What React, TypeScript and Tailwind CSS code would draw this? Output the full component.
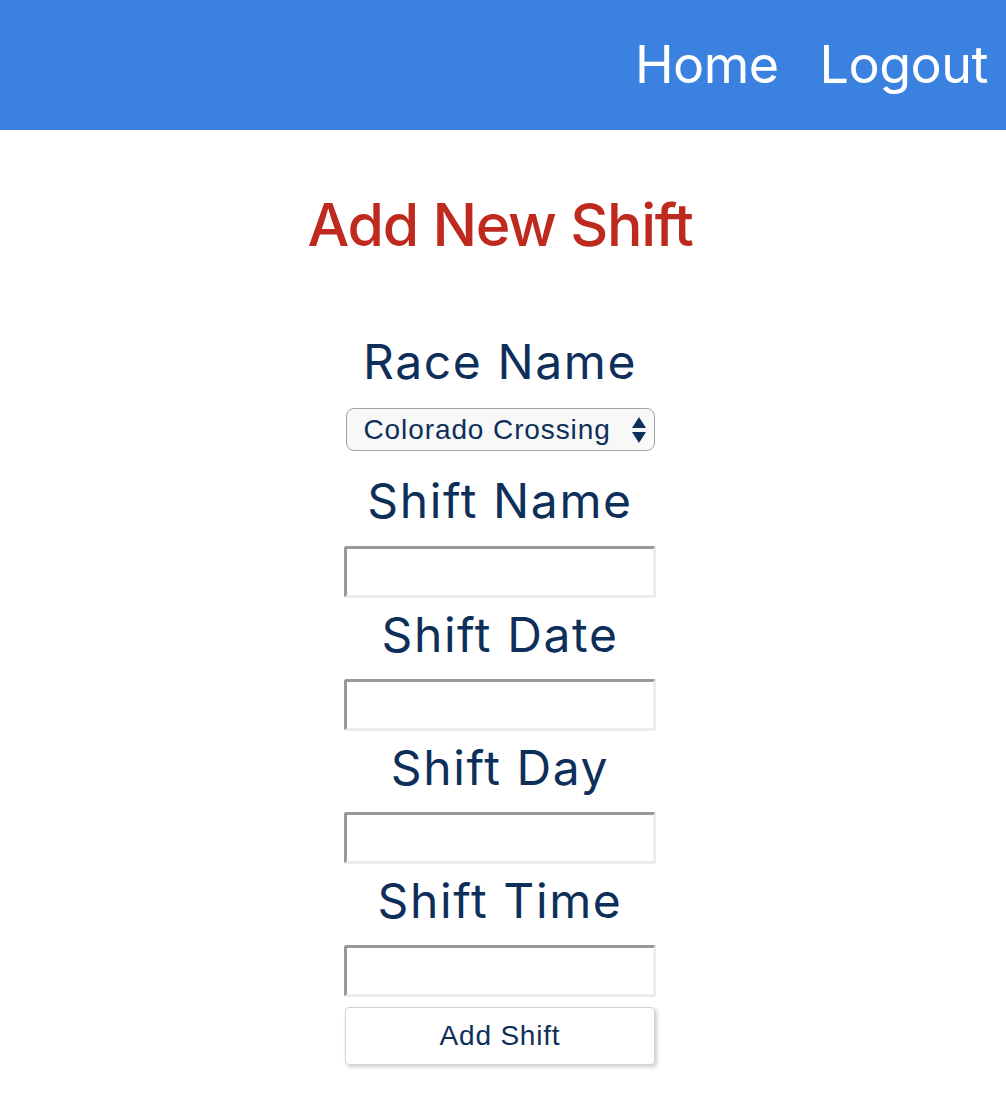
import { useState } from 'react';

const fields = ['Shift Name', 'Shift Date', 'Shift Day', 'Shift Time'];

export default function App() {
  const [race, setRace] = useState('Colorado Crossing');
  const [values, setValues] = useState<Record<string, string>>({});

  return (
    <div className="min-h-[1116px] bg-white font-['Inter',sans-serif]">
      {/* Nav */}
      <header className="flex h-[130px] items-center justify-end gap-[41px] bg-[#3b82e0] pr-[18px]">
        <a href="#" className="text-[52px] leading-none font-normal tracking-[-0.5px] text-white">Home</a>
        <a href="#" className="text-[52px] leading-none font-normal tracking-[-0.5px] text-white">Logout</a>
      </header>

      <main className="flex flex-col items-center pr-[6px]">
        <h1 className="mt-[59px] h-[72px] text-[59px] leading-[72px] font-medium tracking-[-1.3px] text-[#bf2a1f]">
          Add New Shift
        </h1>

        <form className="mt-[73px] flex flex-col items-center" onSubmit={(e) => e.preventDefault()}>
          <label className="h-[56px] text-[48px] leading-[56px] tracking-[1.6px] text-[#0e2f5a]">Race Name</label>
          <div className="relative mt-[18px]">
            <select
              value={race}
              onChange={(e) => setRace(e.target.value)}
              className="h-[43px] w-[309px] appearance-none rounded-[8px] border-[1.5px] border-[#a3a3a3] bg-[#f8f8f8] pl-[17px] font-['Liberation_Sans',Arial,sans-serif] text-[28px] tracking-[0.9px] text-[#0e2f5a] outline-none"
            >
              <option>Colorado Crossing</option>
              <option>Rocky Mountain Relay</option>
            </select>
            <svg className="pointer-events-none absolute top-[9px] right-[9px]" width="14" height="26" viewBox="0 0 14 26">
              <path d="M7 0 L14 11 L0 11 Z" fill="#0e2f5a" />
              <path d="M7 26 L14 15 L0 15 Z" fill="#0e2f5a" />
            </svg>
          </div>

          {fields.map((f, i) => (
            <div key={f} className={i === 0 ? 'mt-[22px] flex flex-col items-center' : 'mt-[9px] flex flex-col items-center'}>
              <label className="h-[56px] text-[48px] leading-[56px] tracking-[1.6px] text-[#0e2f5a]">{f}</label>
              <input
                value={values[f] || ''}
                onChange={(e) => setValues({ ...values, [f]: e.target.value })}
                className={(i === 0 ? 'mt-[17px] ' : 'mt-[16px] ') + "h-[52px] w-[312px] rounded-[3px] border-[3px] border-t-[#999999] border-r-[#ececec] border-b-[#ececec] border-l-[#999999] bg-white px-2 font-['Liberation_Sans',Arial,sans-serif] text-[24px] outline-none"}
              />
            </div>
          ))}

          <button
            type="submit"
            className="mt-[10px] h-[58px] w-[310px] rounded-[4px] border border-[#d4d4d4] bg-white font-['Liberation_Sans',Arial,sans-serif] text-[28px] tracking-[0.8px] text-[#0e2f5a] shadow-[2px_2px_4px_rgba(0,0,0,0.2)]"
          >
            Add Shift
          </button>
        </form>
      </main>
    </div>
  );
}
